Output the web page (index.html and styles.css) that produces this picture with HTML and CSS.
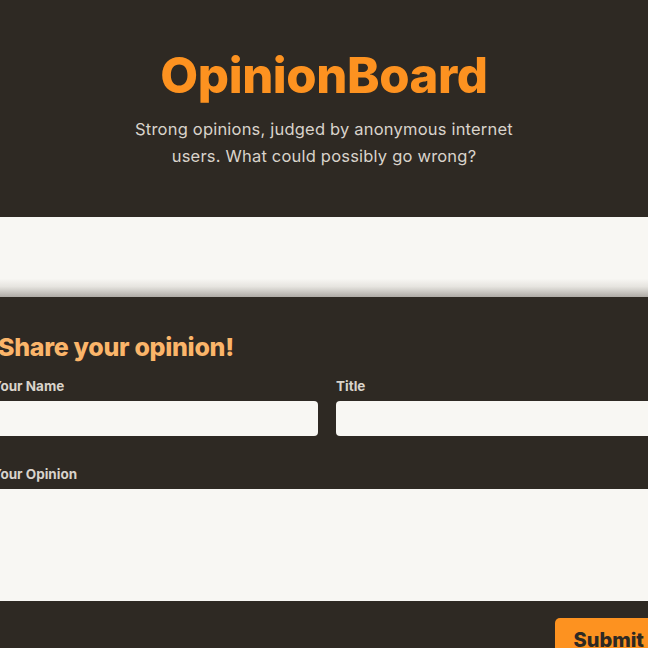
FILE: index.html
```html
<!DOCTYPE html>
<html lang="en">
<head>
<meta charset="utf-8">
<title>OpinionBoard</title>
<link rel="stylesheet" href="styles.css">
</head>
<body>
<header class="hero">
  <h1 class="brand">OpinionBoard</h1>
  <p class="tagline">Strong opinions, judged by anonymous internet users. What could possibly go wrong?</p>
</header>
<section class="band"></section>
<section class="panel">
  <form class="share-form">
    <h2 class="form-title">Share your opinion!</h2>
    <div class="row">
      <label class="field">
        <span class="label">Your Name</span>
        <input class="input" type="text">
      </label>
      <label class="field">
        <span class="label">Title</span>
        <input class="input" type="text">
      </label>
    </div>
    <label class="field field-wide">
      <span class="label">Your Opinion</span>
      <textarea class="textarea"></textarea>
    </label>
    <div class="actions">
      <button class="submit" type="button">Submit</button>
    </div>
  </form>
</section>
</body>
</html>
```
FILE: styles.css
```css
html, body {
  margin: 0;
  padding: 0;
  background: #2e2923;
  overflow: hidden;
}
body {
  width: 648px;
  height: 648px;
  font-family: "Inter", "Noto Sans", sans-serif;
}
.hero {
  display: flex;
  flex-direction: column;
  align-items: center;
  padding-top: 48px;
  height: 217px;
  box-sizing: border-box;
}
.brand {
  margin: 0;
  font-family: "Inter", sans-serif;
  font-weight: 800;
  font-size: 49px;
  line-height: 56px;
  letter-spacing: -0.4px;
  color: #fd9220;
}
.tagline {
  margin: 12px 0 0;
  width: 400px;
  text-align: center;
  font-size: 16.5px;
  line-height: 27px;
  letter-spacing: 0.2px;
  color: #d9d3cb;
}
.band {
  height: 80px;
  background: linear-gradient(to bottom, #f8f7f3 0%, #f8f7f3 77%, #e6e4df 87%, #aeaaa5 100%);
}
.panel {
  padding-top: 30px;
}
.share-form {
  margin-left: -8px;
  width: 670px;
  display: flex;
  flex-direction: column;
}
.form-title {
  margin: 0 0 10px 6px;
  font-weight: 800;
  font-size: 25px;
  line-height: 40px;
  color: #fbb56a;
  letter-spacing: -0.3px;
}
.row {
  display: grid;
  grid-template-columns: 1fr 1fr;
  column-gap: 18px;
}
.field {
  display: flex;
  flex-direction: column;
}
.label {
  font-size: 13.5px;
  font-weight: 700;
  line-height: 18px;
  color: #d9d3cb;
  margin-bottom: 6px;
}
.input {
  height: 35px;
  box-sizing: border-box;
  border: none;
  border-radius: 4px;
  background: #f8f7f3;
}
.field-wide {
  margin-top: 29px;
}
.textarea {
  height: 112px;
  box-sizing: border-box;
  border: none;
  border-radius: 4px;
  background: #f8f7f3;
  resize: none;
}
.actions {
  display: flex;
  justify-content: flex-end;
  margin-top: 17px;
}
.submit {
  border: none;
  border-radius: 5px;
  background: #fd9220;
  color: #2e2923;
  font-family: "Inter", sans-serif;
  font-weight: 800;
  font-size: 20px;
  padding: 10px 18px;
}
```
